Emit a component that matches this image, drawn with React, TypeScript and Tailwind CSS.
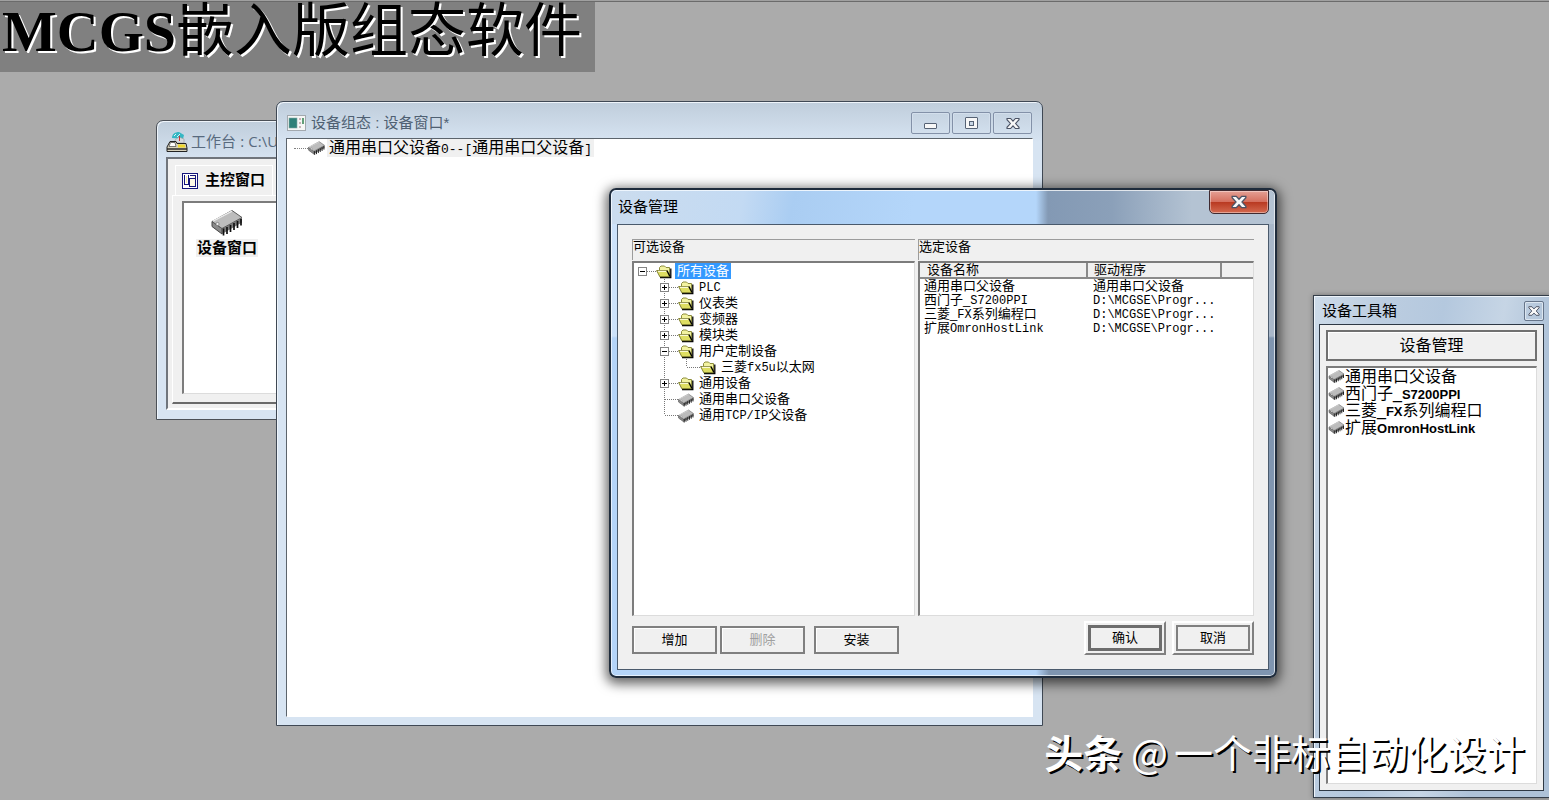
import { Fragment, type ReactNode } from "react";

const CJK = "font-['Liberation_Sans','Noto_Sans_CJK_SC',sans-serif]";

/* Sets the half-width runs of a label in their own face, beside the full-width characters. */
function Mixed({ text, latin }: { text: string; latin: string }) {
  return (
    <>
      {text.split(/([\x21-\x5e\x60-\x7e]+)/).map((part, i) =>
        i % 2 ? (
          <span key={i} className={latin}>
            {part}
          </span>
        ) : (
          <Fragment key={i}>{part}</Fragment>
        ),
      )}
    </>
  );
}

const MONO_SM = "font-['Liberation_Mono',monospace] text-[12px] leading-[12px]";
const MONO_MD = "font-['Liberation_Mono',monospace] text-[13px] leading-[13px]";
const SANS_BOLD = "font-['Liberation_Sans',sans-serif] text-[13px] leading-[13px] font-bold";

function ChipIcon({ className }: { className: string }) {
  return (
    <svg viewBox="0 0 32 26" className={className} aria-hidden="true">
      <path d="M1 12 L11 19 V24.500 L1 17 Z" fill="#8a8a8a" stroke="#444" strokeWidth="1" />
      <path d="M11 19 L31 8 V13 L11 24.500 Z" fill="#7a7a7a" />
      <path d="M1 12 L21 1 L31 8 L11 19 Z" fill="#bcbcbc" stroke="#5a5a5a" strokeWidth="1" />
      <path d="M2 11.600 L21 1.600" stroke="#ececec" strokeWidth="1.200" />
      <path
        d="M12.500 19 V26 M16 17.500 V24.500 M19.500 15.500 V22.500 M23 13.500 V20.500 M26.500 11.500 V18.500 M30 9.500 V16"
        stroke="#111"
        strokeWidth="1.700"
      />
      <circle cx="6.500" cy="14.500" r="1.600" fill="#eee" stroke="#666" strokeWidth=".6" />
    </svg>
  );
}

function FolderIcon() {
  return (
    <svg viewBox="0 0 16 16" className="size-4" aria-hidden="true">
      <path d="M3.500 12 V3.500 L5 2 H8.500 L10 3.500 H13.500 V12 Z" fill="#f3f3a0" stroke="#8c8c3c" />
      <path d="M14.800 4.500 V13.500 H4" fill="none" stroke="#000" strokeWidth="1.300" />
      <path d="M.6 6.500 H10.500 L13.600 12.700 H3.800 Z" fill="#dede62" stroke="#77772a" strokeWidth=".9" />
      <path d="M2 7.300 H10 " stroke="#fffff0" strokeWidth="1" />
      <path d="M11 6.500 L14 12.500" stroke="#000" strokeWidth="1.200" />
    </svg>
  );
}

function WorkbenchIcon() {
  return (
    <svg viewBox="0 0 22 22" className="h-[22px] w-[22px]" aria-hidden="true">
      <path d="M6 7 C6 3 9 1 13 1 L18 4 L17 8 Z" fill="#35b7c4" />
      <path d="M8 5 L10 3 M11 6 L14 3" stroke="#d8f6f8" strokeWidth="1" />
      <path d="M9 9 L13 6 L18 8 L18 12 H9 Z" fill="#d5d8de" stroke="#999" strokeWidth=".6" />
      <path d="M13.500 5 V10" stroke="#c33" strokeWidth="1" />
      <path d="M1 16 L4 10.500 H10 L11 12.500 H20 L21 17 V20.500 H1 Z" fill="#d7d2bd" stroke="#222" strokeWidth="1" />
      <path d="M4.500 11.500 H9 L10 15.500 H3 Z" fill="#fff" stroke="#444" strokeWidth=".7" />
      <path d="M12 13.500 H18.500 L19.500 16.500 H12 Z" fill="#efd72c" />
      <path d="M1 18 H21" stroke="#222" strokeWidth="1.400" />
    </svg>
  );
}

function FormIcon() {
  return (
    <svg viewBox="0 0 19 16" className="h-4 w-[19px]" aria-hidden="true">
      <rect x=".5" y=".5" width="18" height="15" fill="#f6f6f6" stroke="#a2a8ae" />
      <rect x="2" y="3" width="8" height="10" fill="#2f7f78" stroke="#7fa9a4" strokeWidth=".6" />
      <path d="M12 4 H14 M12 8 H14 M12 12 H14" stroke="#c8b4b8" strokeWidth="2" />
      <path d="M16 3 V9" stroke="#237a44" strokeWidth="1.400" />
    </svg>
  );
}

function PanelIcon() {
  return (
    <svg viewBox="0 0 16 16" className="size-4" aria-hidden="true" shapeRendering="crispEdges">
      <rect x=".5" y=".5" width="15" height="15" fill="#fff" stroke="#15157a" />
      <path d="M2.500 2 V11.500 H6 M6.500 2 V12" fill="none" stroke="#15157a" />
      <path d="M4 3 H5 V10 H4 Z" fill="#f5e9a0" />
      <path d="M8 2.500 H13.500 V13.500 H7.500 V5.500 H13" fill="#fffbe6" stroke="#15157a" />
    </svg>
  );
}

function CrossGlyph({ className }: { className: string }) {
  return (
    <svg viewBox="0 0 14 12" className={className} aria-hidden="true">
      <path
        d="M1 1 H4.600 L7 3.600 L9.400 1 H13 V2.200 L9.600 6 L13 9.800 V11 H9.400 L7 8.400 L4.600 11 H1 V9.800 L4.400 6 L1 2.200 Z"
        fill="#f7f7f7"
        stroke="#4a5264"
        strokeWidth="1.100"
      />
    </svg>
  );
}

function CaptionButton({ label, children }: { label: string; children: ReactNode }) {
  return (
    <button
      type="button"
      aria-label={label}
      className="flex h-[22px] w-[39px] items-center justify-center rounded-[2px] border border-[#8391a8] shadow-[inset_0_0_0_1px_#d3dfec]"
    >
      {children}
    </button>
  );
}

/* One 22px column of the tree's dotted guide lines. */
function Guide({ up, down, across, box }: { up?: boolean; down?: boolean; across?: boolean; box?: "+" | "-" }) {
  return (
    <svg viewBox="0 0 22 16" className="h-4 w-[22px] shrink-0" aria-hidden="true" shapeRendering="crispEdges">
      <g stroke="#777" strokeDasharray="1 1" fill="none">
        {up && <path d="M8.500 0 V8" />}
        {down && <path d="M8.500 8 V16" />}
        {across && <path d="M9 8.500 H22" />}
      </g>
      {box && (
        <>
          <rect x="4.500" y="4.500" width="8" height="8" fill="#fff" stroke="#848484" />
          <path d={box === "+" ? "M6 8.500 H11 M8.500 6 V11" : "M6 8.500 H11"} stroke="#000" />
        </>
      )}
    </svg>
  );
}

type Row = { label: string; depth: 0 | 1 | 2; box?: "+" | "-"; chip?: boolean; last?: boolean };

const TREE: Row[] = [
  { label: "所有设备", depth: 0, box: "-" },
  { label: "PLC", depth: 1, box: "+" },
  { label: "仪表类", depth: 1, box: "+" },
  { label: "变频器", depth: 1, box: "+" },
  { label: "模块类", depth: 1, box: "+" },
  { label: "用户定制设备", depth: 1, box: "-" },
  { label: "三菱fx5u以太网", depth: 2, last: true },
  { label: "通用设备", depth: 1, box: "+" },
  { label: "通用串口父设备", depth: 1, chip: true },
  { label: "通用TCP/IP父设备", depth: 1, chip: true, last: true },
];

const SELECTED = [
  ["通用串口父设备", "通用串口父设备"],
  ["西门子_S7200PPI", "D:\\MCGSE\\Progr..."],
  ["三菱_FX系列编程口", "D:\\MCGSE\\Progr..."],
  ["扩展OmronHostLink", "D:\\MCGSE\\Progr..."],
];

const SUNKEN = "border-t-2 border-l-2 border-r border-b border-t-[#7c7c7c] border-l-[#7c7c7c] border-r-[#dcdcdc] border-b-[#dcdcdc] bg-white";

function DeviceTree() {
  return (
    <ul role="tree" aria-label="可选设备" className={`min-h-0 flex-1 ${SUNKEN} text-[13px] leading-4`}>
      {TREE.map((row) => (
        <li key={row.label} role="treeitem" className="flex h-4 items-center">
          {row.depth === 0 && <Guide across box={row.box} />}
          {row.depth === 1 && (
            <>
              <span className="w-[22px]" />
              <Guide up down={!row.last} across box={row.box} />
            </>
          )}
          {row.depth === 2 && (
            <>
              <span className="w-[22px]" />
              <Guide up down />
              <Guide up across />
            </>
          )}
          <span className="flex w-[19px] shrink-0 pt-px">
            {row.chip ? <ChipIcon className="h-[14px] w-4" /> : <FolderIcon />}
          </span>
          <span className={row.depth === 0 ? "h-4 bg-[#3399ff] px-[2px] text-white" : "px-[2px]"}>
            <Mixed text={row.label} latin={MONO_SM} />
          </span>
        </li>
      ))}
    </ul>
  );
}

function PanelHeader({ children }: { children: ReactNode }) {
  return (
    <h3 className="mb-px h-[21px] border-t border-l border-[#9c9c9c] text-[13px] leading-[14px]">{children}</h3>
  );
}

function PushButton({ children, disabled }: { children: ReactNode; disabled?: boolean }) {
  return (
    <button
      type="button"
      disabled={disabled}
      className="h-7 w-[85px] border-2 border-[#808080] bg-[#f0f0f0] text-[13px] shadow-[inset_1px_1px_0_#fff] disabled:text-[#a0a0a0]"
    >
      {children}
    </button>
  );
}

function WorkbenchWindow() {
  return (
    <section className="absolute top-[120px] left-[156px] flex h-[300px] w-[400px] flex-col rounded-t-[7px] border border-[#4b5057] bg-[#d7e4f2] bg-[linear-gradient(to_bottom,#bfcddb,#d7e4f2_40px)] px-[9px] pb-[9px] shadow-[inset_1px_1px_0_#eef4fa]">
      <header className="flex h-9 items-center gap-[3px] pt-[6px] text-[15px] text-[#586a7e]">
        <WorkbenchIcon />
        <h2><Mixed text="工作台 : C:\U" latin="font-['Open_Sans',sans-serif] text-[15px]" /></h2>
      </header>
      <div className="flex min-h-0 flex-1 flex-col border-2 border-[#70757c] border-b-white bg-[#f0f0f0] pt-[6px] pb-[4px] pl-[4px]">
        <div className="ml-[3px] flex h-[30px] w-[98px] items-center gap-[7px] border border-b-0 border-white pl-[6px] text-[15px] font-bold">
          <PanelIcon />
          主控窗口
        </div>
        <div className="flex flex-1 border-t border-b-2 border-l border-t-white border-b-[#6a6a6a] border-l-white pt-[5px] pb-[8px] pl-[9px]">
          <div className={`flex-1 ${SUNKEN} pt-[6px]`}>
            <div className="flex w-[86px] flex-col items-center">
              <ChipIcon className="h-[27px] w-8" />
              <span className="mt-[3px] bg-[#f0f0f0] px-[1px] text-[15px] leading-[18px] font-bold">设备窗口</span>
            </div>
          </div>
        </div>
      </div>
    </section>
  );
}

function ConfigWindow() {
  return (
    <section className="absolute top-[101px] left-[276px] flex h-[625px] w-[767px] flex-col rounded-t-[7px] border border-[#3f4854] bg-[#d7e4f2] bg-[linear-gradient(to_bottom,#bfcddb,#d7e4f2_40px)] px-[9px] pb-[8px] shadow-[inset_1px_1px_0_#eef4fa]">
      <header className="flex h-9 items-center pt-[6px] pl-px text-[15px] text-[#4f6072]">
        <FormIcon />
        <h2 className="ml-[5px] flex-1">设备组态 : 设备窗口*</h2>
        <div className="flex gap-[2px] pr-[1px]">
          <CaptionButton label="最小化">
            <span className="mt-[5px] h-[6px] w-[13px] rounded-[1px] border border-[#566274] bg-[#f7f7f7]" />
          </CaptionButton>
          <CaptionButton label="最大化">
            <span className="flex h-3 w-[13px] items-center justify-center rounded-[1px] border border-[#566274] bg-[#f7f7f7]">
              <span className="size-[5px] border border-[#566274] bg-[#c9d6e4]" />
            </span>
          </CaptionButton>
          <CaptionButton label="关闭">
            <CrossGlyph className="h-[13px] w-[14px]" />
          </CaptionButton>
        </div>
      </header>
      <div className="min-h-0 flex-1 border border-t-[#5c646c] border-r-white border-b-white border-l-[#5c646c] bg-white">
        <div className="flex h-[18px] items-center pl-[7px] text-[16px] leading-[18px]">
          <span className="w-[14px] border-t border-dotted border-[#808080]" />
          <ChipIcon className="h-[14px] w-[17px]" />
          <span className="ml-[2px] bg-[#f0f0f0] px-[2px]">
            <Mixed text="通用串口父设备0--[通用串口父设备]" latin={MONO_MD} />
          </span>
        </div>
      </div>
    </section>
  );
}

function DeviceDialog() {
  return (
    <section
      role="dialog"
      aria-labelledby="device-dialog-title"
      className="absolute top-[188px] left-[609px] flex h-[490px] w-[668px] flex-col rounded-[7px] border-2 border-[#1f2c3c] bg-[linear-gradient(to_bottom,rgba(255,255,255,0.32)_0_146px,transparent_148px),linear-gradient(to_right,#b4d4f8_425px,#7f95b0_438px)] px-[6px] pb-[6px] shadow-[0_3px_12px_3px_rgba(0,0,0,0.6),inset_0_0_0_1px_rgba(255,255,255,0.65)]"
    >
      <div className="-mx-[5px] mt-px flex h-[33px] rounded-t-[5px] bg-[linear-gradient(100deg,#cbdcee_0,#c3daf3_130px,#aacdf2_180px,transparent_300px),linear-gradient(to_right,#b4d6fa_424px,#8399b4_436px,#8ba0b9_500px,#b4c3d3_580px)] pl-[4px]">
        <h2 id="device-dialog-title" className="flex-1 pt-[6px] text-[15px] leading-5 text-black">
          <span className="pl-[2px]">设备管理</span>
        </h2>
        <button
          type="button"
          aria-label="关闭"
          className="mr-[5px] -mt-px flex h-[24px] w-[60px] items-center justify-center rounded-b-[5px] border border-[#3f2a30] bg-[linear-gradient(to_bottom,#e5a195_0,#d5705f_48%,#b93a22_52%,#d46a50_100%)] shadow-[inset_0_0_0_1px_rgba(255,255,255,0.4)]"
        >
          <CrossGlyph className="h-[14px] w-4" />
        </button>
      </div>
      <div className="flex min-h-0 flex-1 flex-col border border-[#4a5a6c] bg-[#f0f0f0] pt-[14px] pr-[14px] pb-[13px] pl-[14px] text-black">
        <div className="flex h-[377px] gap-[3px]">
          <div className="flex w-[283px] flex-col">
            <PanelHeader>可选设备</PanelHeader>
            <DeviceTree />
          </div>
          <div className="flex flex-1 flex-col">
            <PanelHeader>选定设备</PanelHeader>
            <div className={`min-h-0 flex-1 ${SUNKEN}`}>
              <table className="w-full table-fixed border-separate border-spacing-0 text-left text-[13px] leading-[14px]">
                <colgroup>
                  <col className="w-[168px]" />
                  <col className="w-[134px]" />
                  <col />
                </colgroup>
                <thead>
                  <tr className="h-4 bg-[#f0f0f0]">
                    <th className="border-r-2 border-b-2 border-[#8a8a8a] p-0 pl-[7px] font-normal">设备名称</th>
                    <th className="border-r-2 border-b-2 border-[#8a8a8a] p-0 pl-[6px] font-normal">驱动程序</th>
                    <th className="border-b-2 border-[#8a8a8a] p-0" />
                  </tr>
                </thead>
                <tbody>
                  {SELECTED.map(([name, driver]) => (
                    <tr key={name} className="h-[14px]">
                      <td className="p-0 pl-[4px] whitespace-nowrap"><Mixed text={name} latin={MONO_SM} /></td>
                      <td className="p-0 pl-[5px] whitespace-nowrap"><Mixed text={driver} latin={MONO_SM} /></td>
                      <td className="p-0" />
                    </tr>
                  ))}
                </tbody>
              </table>
            </div>
          </div>
        </div>
        <footer className="mt-[5px] flex items-start">
          <div className="flex flex-1 gap-[3px] pt-[5px]">
            <PushButton>增加</PushButton>
            <PushButton disabled>删除</PushButton>
            <div className="ml-[6px]">
              <PushButton>安装</PushButton>
            </div>
          </div>
          <div className="flex gap-[6px]">
            <div className="border-2 border-t-white border-r-[#808080] border-b-[#808080] border-l-white p-[2px]">
              <button type="button" className="h-[26px] w-[74px] border-[3px] border-[#6d6d6d] text-[13px] leading-4">
                确认
              </button>
            </div>
            <div className="border-2 border-t-white border-r-[#808080] border-b-[#808080] border-l-white p-[2px]">
              <button type="button" className="h-[26px] w-[74px] border-2 border-[#808080] text-[13px] leading-4">
                取消
              </button>
            </div>
          </div>
        </footer>
      </div>
    </section>
  );
}

function ToolboxWindow() {
  return (
    <section className="absolute top-[295px] -right-px flex h-[503px] w-[237px] flex-col border border-[#333d49] bg-[#b3c6da] bg-[linear-gradient(100deg,#cddbe9_0,#bccde0_70px,#b4c8de_130px,#c6d5e5_190px,#aec2d8_240px)] px-[5px] pb-[6px] shadow-[inset_1px_1px_0_#eef4fa,0_0_5px_rgba(0,0,0,0.35)]">
      <header className="flex h-7 items-center justify-between pt-[2px] pl-[3px] text-[15px] text-black">
        <h2>设备工具箱</h2>
        <button
          type="button"
          aria-label="关闭"
          className="flex size-5 items-center justify-center rounded-[2px] border border-[#66758a] shadow-[inset_0_0_0_1px_#dce6f0]"
        >
          <CrossGlyph className="h-3 w-3" />
        </button>
      </header>
      <div className="flex min-h-0 flex-1 flex-col border border-[#2e3844] bg-[#f0f0f0] px-[6px] pt-[5px] pb-[6px] text-black">
        <button type="button" className="h-[31px] border-2 border-[#707070] bg-[#f0f0f0] text-[16px] shadow-[inset_1px_1px_0_#fff]">
          设备管理
        </button>
        <ul className={`mt-[5px] min-h-0 flex-1 ${SUNKEN} text-[16px]`}>
          {SELECTED.map(([name]) => (
            <li key={name} className="flex h-[17px] items-center leading-[17px]">
              <ChipIcon className="h-[13px] w-[17px]" />
              <span><Mixed text={name} latin={SANS_BOLD} /></span>
            </li>
          ))}
        </ul>
      </div>
    </section>
  );
}

export default function App() {
  return (
    <main className={`relative h-screen min-h-[800px] overflow-hidden bg-[#ababab] ${CJK}`}>
      <div className="h-[2px] border-t border-[#a0a0a0] bg-[#6b6b6b]" />
      <h1 className="h-[70px] w-[595px] bg-[#808080] pl-[2px] font-['Liberation_Serif','Noto_Sans_CJK_SC',serif] text-[58px] leading-[60px] whitespace-nowrap text-black [text-shadow:2px_2px_0_#fff]">
        <span className="font-bold">MCGS</span>
        <span className="font-normal">嵌入版组态软件</span>
      </h1>
      <WorkbenchWindow />
      <ConfigWindow />
      <ToolboxWindow />
      <DeviceDialog />
      <p className="pointer-events-none absolute right-6 bottom-[21px] font-['Noto_Sans_CJK_SC',sans-serif] text-[39px] leading-[56px] whitespace-nowrap text-white [text-shadow:2px_2px_0_#000]">
        <span className="font-bold">头条</span> <span className="mr-[6px]">@</span>一个非标自动化设计
      </p>
    </main>
  );
}
